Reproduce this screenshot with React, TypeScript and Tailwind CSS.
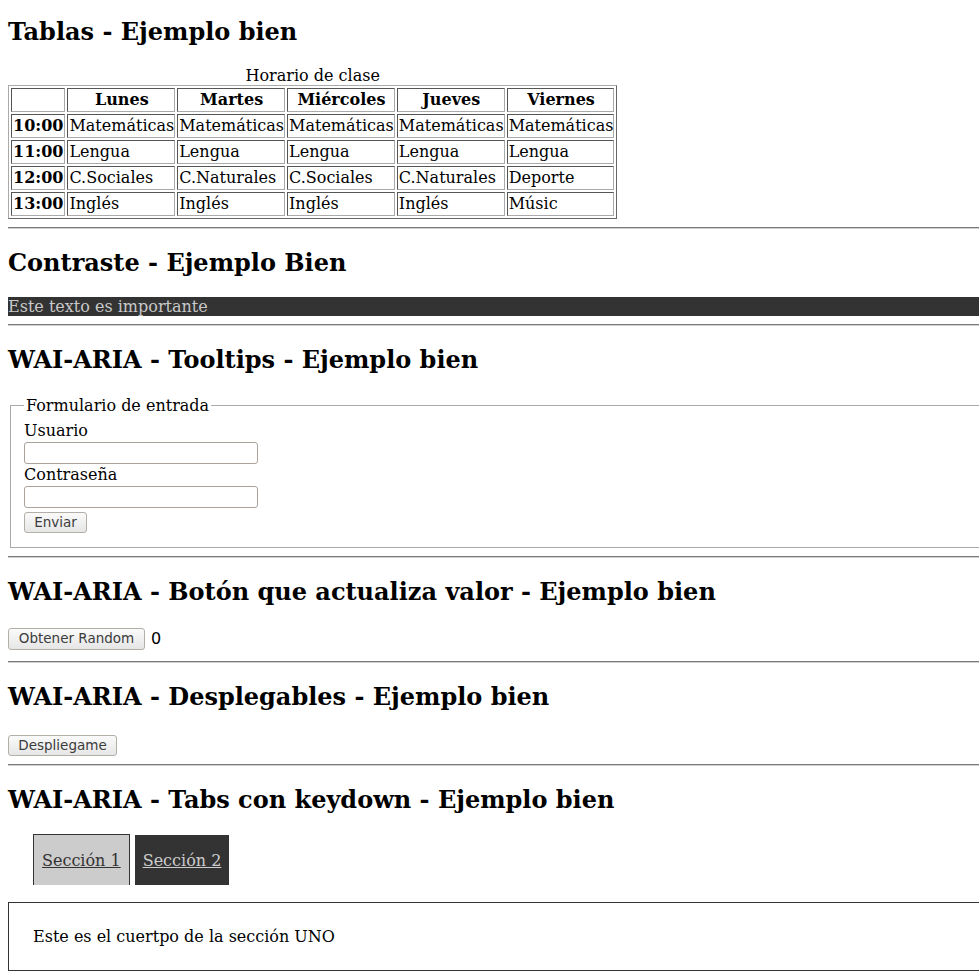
const horario = [
  { hora: '10:00', clases: ['Matemáticas', 'Matemáticas', 'Matemáticas', 'Matemáticas', 'Matemáticas'] },
  { hora: '11:00', clases: ['Lengua', 'Lengua', 'Lengua', 'Lengua', 'Lengua'] },
  { hora: '12:00', clases: ['C.Sociales', 'C.Naturales', 'C.Sociales', 'C.Naturales', 'Deporte'] },
  { hora: '13:00', clases: ['Inglés', 'Inglés', 'Inglés', 'Inglés', 'Músic'] },
];

const dias = ['Lunes', 'Martes', 'Miércoles', 'Jueves', 'Viernes'];

const cell = 'border border-t-[#555] border-l-[#555] border-b-[#aaa] border-r-[#aaa] p-px leading-[20px]';
const dayCell = 'border border-t-[#555] border-l-[#555] border-b-[#aaa] border-r-[#aaa] py-px pl-px pr-0 leading-[20px]';
const btn =
  "font-['DejaVu_Sans',sans-serif] text-[13.5px] text-[#3c3c3c] bg-gradient-to-b from-[#fafafa] to-[#e6e6e6] border border-[#b3aea8] rounded-[3px] leading-none";

function Hr() {
  return <hr className="my-2 h-0 border-0 border-t border-t-[#7a7a7a] border-b border-b-[#d0d0d0]" />;
}

function Title({ children }: { children: React.ReactNode }) {
  return <h2 className="my-5 text-2xl font-bold leading-[28px]">{children}</h2>;
}

export default function App() {
  return (
    <div className="overflow-hidden min-h-screen bg-white">
      <div className="font-['DejaVu_Serif',serif] text-base text-black pl-2 w-[1000px]">
        <h2 className="mt-[18px] mb-5 text-2xl font-bold leading-[28px]">Tablas - Ejemplo bien</h2>

        <table className="border-separate border-spacing-[2px] border border-t-[#aaa] border-l-[#aaa] border-b-[#666] border-r-[#666]">
          <caption className="leading-[19px]">Horario de clase</caption>
          <thead>
            <tr>
              <td className={cell}></td>
              {dias.map(d => (
                <th key={d} className={dayCell + ' font-bold text-center'}>{d}</th>
              ))}
            </tr>
          </thead>
          <tbody>
            {horario.map(r => (
              <tr key={r.hora}>
                <th className={cell + ' font-bold'}>{r.hora}</th>
                {r.clases.map((c, i) => (
                  <td key={i} className={dayCell}>{c}</td>
                ))}
              </tr>
            ))}
          </tbody>
        </table>

        <Hr />
        <Title>Contraste - Ejemplo Bien</Title>
        <div className="bg-[#333] text-[#c8c8c8] leading-[19px]">Este texto es importante</div>

        <Hr />
        <Title>WAI-ARIA - Tooltips - Ejemplo bien</Title>
        <form className="pt-[2px]">
          <fieldset className="mx-0.5 border border-[#aaa] pt-[6px] px-[13px] pb-[14px]">
            <legend className="px-0.5 leading-[19px]">Formulario de entrada</legend>
            <div className="flex flex-col items-start">
              <label htmlFor="usuario" className="leading-[19px]">Usuario</label>
              <input id="usuario" type="text" className="mt-[2px] w-[234px] h-[22px] border border-[#a9a39c] rounded-[3px] bg-white" />
              <label htmlFor="pass" className="mt-[1px] leading-[19px]">Contraseña</label>
              <input id="pass" type="password" className="mt-[2px] w-[234px] h-[22px] border border-[#a9a39c] rounded-[3px] bg-white" />
              <button type="button" className={btn + ' mt-1 w-[63px] h-[21px]'}>Enviar</button>
            </div>
          </fieldset>
        </form>

        <Hr />
        <Title>WAI-ARIA - Botón que actualiza valor - Ejemplo bien</Title>
        <div className="h-[27px] flex items-start gap-[6px] pt-[2px]">
          <button type="button" className={btn + ' w-[137px] h-[22px]'}>Obtener Random</button>
          <span className="font-['DejaVu_Sans',sans-serif] text-base leading-[22px]">0</span>
        </div>

        <Hr />
        <Title>WAI-ARIA - Desplegables - Ejemplo bien</Title>
        <div className="h-[25px] pt-[2px]">
          <button type="button" className={btn + ' w-[109px] h-[21px]'}>Despliegame</button>
        </div>

        <Hr />
        <Title>WAI-ARIA - Tabs con keydown - Ejemplo bien</Title>
        <ul className="flex items-end gap-[5px] pl-[25px] mt-5 mb-[17px]">
          <li className="bg-[#ccc] border border-b-0 border-[#333] h-[51px] px-2 flex items-center">
            <a href="#" className="underline text-[#333] leading-[19px]">Sección 1</a>
          </li>
          <li className="bg-[#333] h-[50px] px-2 flex items-center">
            <a href="#" className="underline text-[#ccc] leading-[19px]">Sección 2</a>
          </li>
        </ul>
        <div className="border border-[#333] p-6 leading-[19px]">Este es el cuertpo de la sección UNO</div>
      </div>
    </div>
  );
}
